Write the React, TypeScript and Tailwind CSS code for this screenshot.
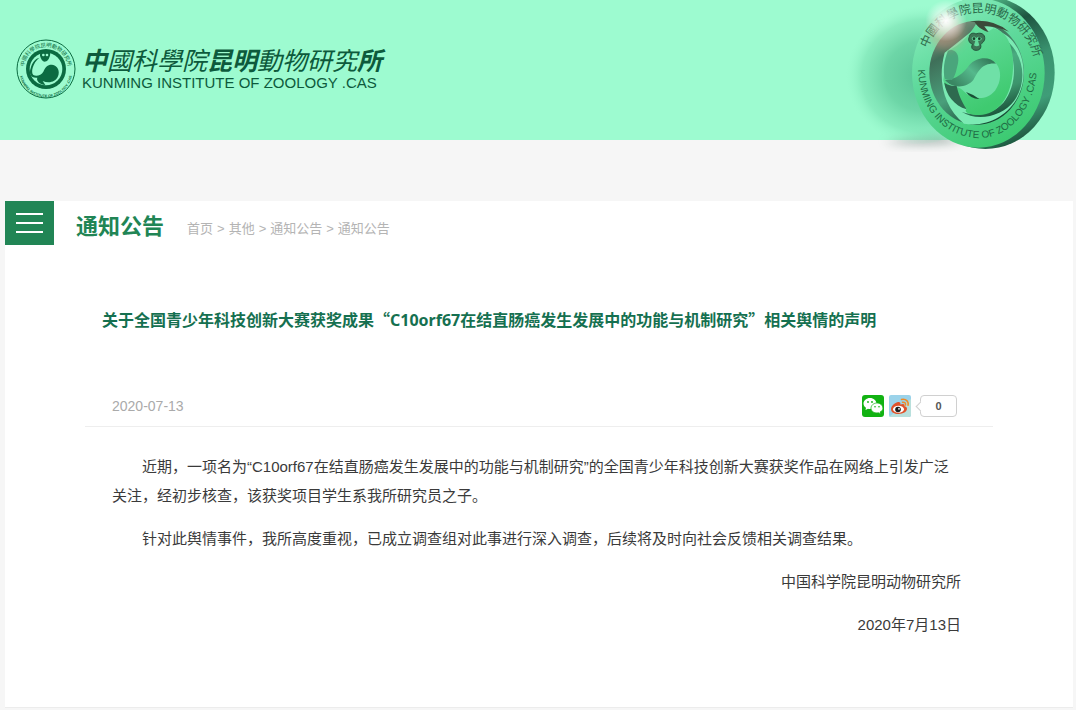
const BREADCRUMBS = ['首页', '其他', '通知公告', '通知公告']

const NAME_ZH = '中國科學院昆明動物研究所'
const NAME_EN = 'KUNMING INSTITUTE OF ZOOLOGY .CAS'

// ── Logos ─────────────────────────────────────────────────────

function Emblem() {
  return (
    <svg viewBox="0 0 180 180" className="size-15 shrink-0" aria-hidden="true">
      <defs>
        <path id="emblem-top" d="M26 106A66 66 0 1 1 154 106" />
        <path id="emblem-bottom" d="M11 96A79 79 0 0 0 169 96" />
      </defs>
      <circle cx="90" cy="90" r="87" fill="none" stroke="#0b6b41" strokeWidth="3" />
      <circle cx="90" cy="90" r="60" fill="#0b6b41" />
      <circle cx="90" cy="90" r="49" fill="#9dfbd0" />
      <path d="M72 50Q70 34 88 32Q106 34 102 50L98 60Q94 68 86 68Q76 66 72 50Z" fill="#0b6b41" />
      <path
        d="M70 56C50 72 44 100 52 108C62 114 76 108 82 98C88 84 96 76 108 77C126 80 132 96 126 112C118 130 98 134 80 126L88 138C70 136 60 124 64 116C44 118 38 104 44 88C48 70 60 58 70 56Z"
        fill="#0b6b41"
      />
      <path d="M70 66Q54 84 58 100Q72 94 76 76Z" fill="#9dfbd0" />
      <circle cx="82" cy="48" r="4" fill="#9dfbd0" />
      <circle cx="93" cy="48" r="4" fill="#9dfbd0" />
      <text className="font-['Noto_Sans_CJK_TC',sans-serif]" fontSize="16" fill="#0b6b41">
        <textPath href="#emblem-top" startOffset="50%" textAnchor="middle">{NAME_ZH}</textPath>
      </text>
      <text className="font-['Liberation_Sans',sans-serif]" fontSize="11" fontWeight="bold" fill="#0b6b41">
        <textPath href="#emblem-bottom" startOffset="50%" textAnchor="middle">{NAME_EN}</textPath>
      </text>
    </svg>
  )
}

function Medal() {
  return (
    <svg viewBox="0 0 738 480" className="absolute top-0 right-0 h-40 overflow-visible" aria-hidden="true">
      <defs>
        <linearGradient id="face" x1="0.1" y1="0" x2="0.6" y2="1">
          <stop offset="0" stopColor="#8ff0c2" />
          <stop offset="0.45" stopColor="#5fd99c" />
          <stop offset="1" stopColor="#3dca72" />
        </linearGradient>
        <linearGradient id="rim" x1="0.4" y1="0" x2="0.8" y2="1">
          <stop offset="0" stopColor="#5fd49a" />
          <stop offset="0.25" stopColor="#1d5440" />
          <stop offset="0.5" stopColor="#3a9470" />
          <stop offset="0.75" stopColor="#3f9d78" />
          <stop offset="1" stopColor="#123f2c" />
        </linearGradient>
        <linearGradient id="groove" x1="0.2" y1="0" x2="0.7" y2="1">
          <stop offset="0" stopColor="#8a9a86" />
          <stop offset="0.25" stopColor="#3f6f59" />
          <stop offset="0.6" stopColor="#4a9f7b" />
          <stop offset="1" stopColor="#123f2c" />
        </linearGradient>
        <linearGradient id="crescent" x1="0.3" y1="0" x2="0.6" y2="1">
          <stop offset="0" stopColor="#1c5a3e" />
          <stop offset="0.35" stopColor="#4aab80" />
          <stop offset="0.7" stopColor="#3c946c" />
          <stop offset="1" stopColor="#174c35" />
        </linearGradient>
        <linearGradient id="body" x1="0" y1="0" x2="0.4" y2="1">
          <stop offset="0" stopColor="#6ae0a6" />
          <stop offset="1" stopColor="#3fca70" />
        </linearGradient>
        <linearGradient id="tail" x1="0" y1="0.6" x2="1" y2="0">
          <stop offset="0" stopColor="#3a8763" />
          <stop offset="0.45" stopColor="#55b98c" />
          <stop offset="1" stopColor="#2c6a4d" />
        </linearGradient>
        <radialGradient id="trail" cx="0.55" cy="0.52">
          <stop offset="0" stopColor="#3fae80" stopOpacity="0.75" />
          <stop offset="0.5" stopColor="#4dbd8c" stopOpacity="0.6" />
          <stop offset="0.8" stopColor="#62cf9e" stopOpacity="0.35" />
          <stop offset="1" stopColor="#8ff0c4" stopOpacity="0" />
        </radialGradient>
        <radialGradient id="glare">
          <stop offset="0" stopColor="#fff" />
          <stop offset="0.25" stopColor="#fff" stopOpacity="0.8" />
          <stop offset="1" stopColor="#fff" stopOpacity="0" />
        </radialGradient>
        <filter id="soft" x="-40%" y="-60%" width="180%" height="220%">
          <feGaussianBlur stdDeviation="12" />
        </filter>
        <path id="medal-top" d="M284 172C306 82 368 38 450 37C540 42 606 106 618 200" />
        <path id="medal-bottom" d="M264 205C266 330 345 414 450 414C545 412 612 320 620 215" />
      </defs>

      {/* Motion trail */}
      <path d="M160 425Q260 446 400 425L330 405Z" fill="#6f8a80" opacity="0.5" filter="url(#soft)" />
      <ellipse cx="260" cy="220" rx="235" ry="212" fill="url(#trail)" />

      {/* Rim and face */}
      <ellipse cx="466" cy="218" rx="208" ry="229" fill="url(#rim)" />
      <ellipse cx="445" cy="219" rx="199" ry="224" fill="url(#face)" />

      {/* Inner well */}
      <ellipse cx="440" cy="218" rx="142" ry="156" fill="url(#groove)" />
      <path
        d="M344 158C322 240 340 320 402 371C480 385 560 335 578 250C590 190 565 120 515 98C500 82 480 76 462 80L430 90Z"
        fill="#7beab3"
      />
      <path
        d="M516 112C560 160 566 250 520 308C485 345 440 350 395 335C440 366 518 350 552 303C598 240 578 150 516 112Z"
        fill="url(#crescent)"
      />

      {/* Monkey */}
      <path
        d="M438 72L474 95L490 85C535 92 552 150 549 205C546 290 505 345 448 345C415 345 400 335 410 326C376 312 346 280 340 240L352 152C390 140 425 95 438 72Z"
        fill="url(#body)"
      />
      <path
        d="M345 236C375 250 392 238 410 215C430 185 460 165 498 190C515 210 515 245 495 272C470 300 440 298 415 285C400 275 392 262 380 262C365 260 350 252 345 236Z"
        fill="#6fe0a7"
      />
      <path
        d="M345 240C380 238 400 220 418 195C440 170 480 168 498 191C455 188 445 215 430 240C410 265 365 266 345 240Z"
        fill="url(#tail)"
      />
      <path d="M355 152C372 145 390 160 384 190C378 215 376 228 366 240L345 238C338 215 342 175 355 152Z" fill="#4aa57c" />
      <path d="M343 248C348 285 373 317 410 328C392 300 385 280 380 258C368 258 355 256 343 248Z" fill="#2e6a4f" />
      <path d="M408 276Q432 284 448 297Q424 298 408 276Z" fill="#184e34" />
      <path d="M438 72C445 82 460 92 476 96L462 78Q500 78 537 95Q490 54 420 64L434 66Z" fill="#3a4a3a" />
      <path
        d="M418 110C420 98 432 98 438 102C446 98 462 98 464 112C466 124 456 128 452 134C456 150 440 154 430 149C424 145 424 138 428 133C416 128 414 120 418 110Z"
        fill="#3d7656"
        stroke="#23523a"
        strokeWidth="3"
      />
      <path d="M425 114Q432 105 439 114Q448 105 456 116Q452 124 444 122L448 136Q440 142 432 136L436 122Q426 124 425 114Z" fill="#64d99b" />
      <circle cx="432" cy="116" r="4" fill="#173d29" />
      <circle cx="448" cy="116" r="4" fill="#173d29" />

      {/* Lettering */}
      <text className="font-['Noto_Sans_CJK_TC',sans-serif]" fontSize="36" fill="#2a6a4a">
        <textPath href="#medal-top" startOffset="50%" textAnchor="middle">{NAME_ZH}</textPath>
      </text>
      <text className="font-['Liberation_Sans',sans-serif]" fontSize="30" fill="#1e6a43">
        <textPath href="#medal-bottom" startOffset="50%" textAnchor="middle">{NAME_EN}</textPath>
      </text>

      {/* Glare */}
      <circle cx="350" cy="100" r="50" fill="#e79a86" opacity="0.4" filter="url(#soft)" />
      <circle cx="348" cy="62" r="62" fill="url(#glare)" />
    </svg>
  )
}

function WechatIcon() {
  return (
    <svg viewBox="0 0 22 22" className="size-[22px]" aria-hidden="true">
      <rect width="22" height="22" rx="3" fill="#12b212" />
      <path d="M8 3C4.400 3 1.500 5.500 1.500 8.500C1.500 10.300 2.500 11.800 4 12.800L3.500 15L6 13.700C10.200 14.700 14.500 12.200 14.500 8.500C14.500 5.500 11.600 3 8 3Z" fill="#fff" />
      <path d="M15 8C11.700 8 9 10.300 9 13.200C9 16.300 12.500 18.600 16.400 17.700L18.600 19L18.100 17C19.700 16.100 20.900 14.800 20.900 13.200C20.900 10.300 18.300 8 15 8Z" fill="#fff" stroke="#12b212" strokeWidth="0.700" />
      <circle cx="6" cy="7" r="0.900" fill="#12b212" />
      <circle cx="10" cy="7" r="0.900" fill="#12b212" />
      <circle cx="13" cy="11.800" r="0.800" fill="#12b212" />
      <circle cx="17" cy="11.800" r="0.800" fill="#12b212" />
    </svg>
  )
}

function WeiboIcon() {
  return (
    <svg viewBox="0 0 22 22" className="size-[22px]" aria-hidden="true">
      <rect width="22" height="22" rx="2" fill="#9bd3ea" />
      <path d="M0 22L22 4V20Q22 22 20 22Z" fill="#b9e0dc" />
      <path d="M9 7C5 8 2 11.500 2 14.300C2 17.500 5.500 19 9.500 19C14 19 18 16.800 18 13.800C18 12.200 16.800 11.500 15.500 11.200C16 9 14.500 8.300 11.300 9.600C11.800 7.500 10.800 6.600 9 7Z" fill="#e0522a" />
      <ellipse cx="9.500" cy="14.300" rx="5.500" ry="3.500" fill="#fff" />
      <circle cx="9" cy="14.500" r="2.800" fill="#1c1c1c" />
      <circle cx="10" cy="13.800" r="0.900" fill="#fff" />
      <path d="M12.500 4.500C17 3.500 20 6.500 19 10.300M13.500 7.200C15.600 6.900 17 8.200 16.500 10" fill="none" stroke="#f08a24" strokeWidth="1.500" strokeLinecap="round" />
    </svg>
  )
}

// ── Page sections ─────────────────────────────────────────────

function Header() {
  return (
    <header className="relative h-[140px] bg-[#9dfbd0] pt-[39px] pl-4">
      <a href="#" className="flex w-fit items-start gap-1.5 text-[#0d5a3c]">
        <Emblem />
        <span className="block pt-1.5">
          <span className="block font-['Noto_Sans_CJK_TC',sans-serif] text-[25px] leading-7 italic">
            <b>中</b>國科學院<b>昆明</b>動物研究<b>所</b>
          </span>
          <span className="block font-['Liberation_Sans',sans-serif] text-[15px] leading-5">{NAME_EN}</span>
        </span>
      </a>
      <Medal />
    </header>
  )
}

function ShareBar() {
  return (
    <div className="flex items-center gap-[5px] pt-1">
      <button type="button" aria-label="分享到微信"><WechatIcon /></button>
      <button type="button" aria-label="分享到微博"><WeiboIcon /></button>
      <div className="relative ml-1 flex h-[22px] w-[37px] items-center justify-center rounded-sm border border-[#d0d0d0] bg-white font-['Liberation_Sans',sans-serif] text-[11px] font-bold text-[#555]">
        <span className="absolute top-[7px] -left-[4px] size-[7px] rotate-45 border-b border-l border-[#d0d0d0] bg-white" />
        0
      </div>
    </div>
  )
}

export default function App() {
  return (
    <div className="min-h-screen bg-[#f6f6f6] pb-0.5 font-['Liberation_Sans','Noto_Sans_CJK_SC',sans-serif]">
      <Header />

      <main className="mt-[61px] mr-[3px] ml-[5px] border-b border-[#ececec] bg-white pb-[68px]">
        {/* Section bar */}
        <div className="flex items-start">
          <button type="button" aria-label="菜单" className="flex h-11 w-[49px] flex-col items-center justify-center gap-[7px] bg-[#218555]">
            <span className="h-0.5 w-[27px] bg-white" />
            <span className="h-0.5 w-[27px] bg-white" />
            <span className="h-0.5 w-[27px] bg-white" />
          </button>
          <h2 className="ml-[22px] pt-2.5 text-[22px] leading-8 font-bold text-[#218555]">通知公告</h2>
          <nav className="ml-[23px] flex gap-1 pt-[18px] text-[13px] leading-5 text-[#b4b4b4]">
            {BREADCRUMBS.map((label, i) => (
              <span key={i} className="flex gap-1">
                {i > 0 && <span>&gt;</span>}
                <a href="#">{label}</a>
              </span>
            ))}
          </nav>
        </div>

        <article className="mx-20">
          <h1 className="mt-[62px] pl-[17px] font-['Noto_Sans_CJK_SC',sans-serif] text-base leading-6 font-bold text-[#157050]">
            关于全国青少年科技创新大赛获奖成果“<span className="font-['Noto_Sans',sans-serif]">C10orf67</span>在结直肠癌发生发展中的功能与机制研究”相关舆情的声明
          </h1>

          <div className="mt-[58px] flex items-center justify-between border-b border-[#eee] pr-9 pb-2 pl-[27px]">
            <time className="pt-1 text-sm leading-6 text-[#aaa]">2020-07-13</time>
            <ShareBar />
          </div>

          <div className="pt-[25px] pr-8 pl-[27px] text-[15px] leading-[29px] text-[#3a3a3a]">
            <p className="indent-[30px]">
              近期，一项名为“C10orf67在结直肠癌发生发展中的功能与机制研究”的全国青少年科技创新大赛获奖作品在网络上引发广泛关注，经初步核查，该获奖项目学生系我所研究员之子。
            </p>
            <p className="mt-[14px] indent-[30px]">
              针对此舆情事件，我所高度重视，已成立调查组对此事进行深入调查，后续将及时向社会反馈相关调查结果。
            </p>
            <p className="mt-[14px] text-right">中国科学院昆明动物研究所</p>
            <p className="mt-[14px] text-right">2020年7月13日</p>
          </div>
        </article>
      </main>
    </div>
  )
}
